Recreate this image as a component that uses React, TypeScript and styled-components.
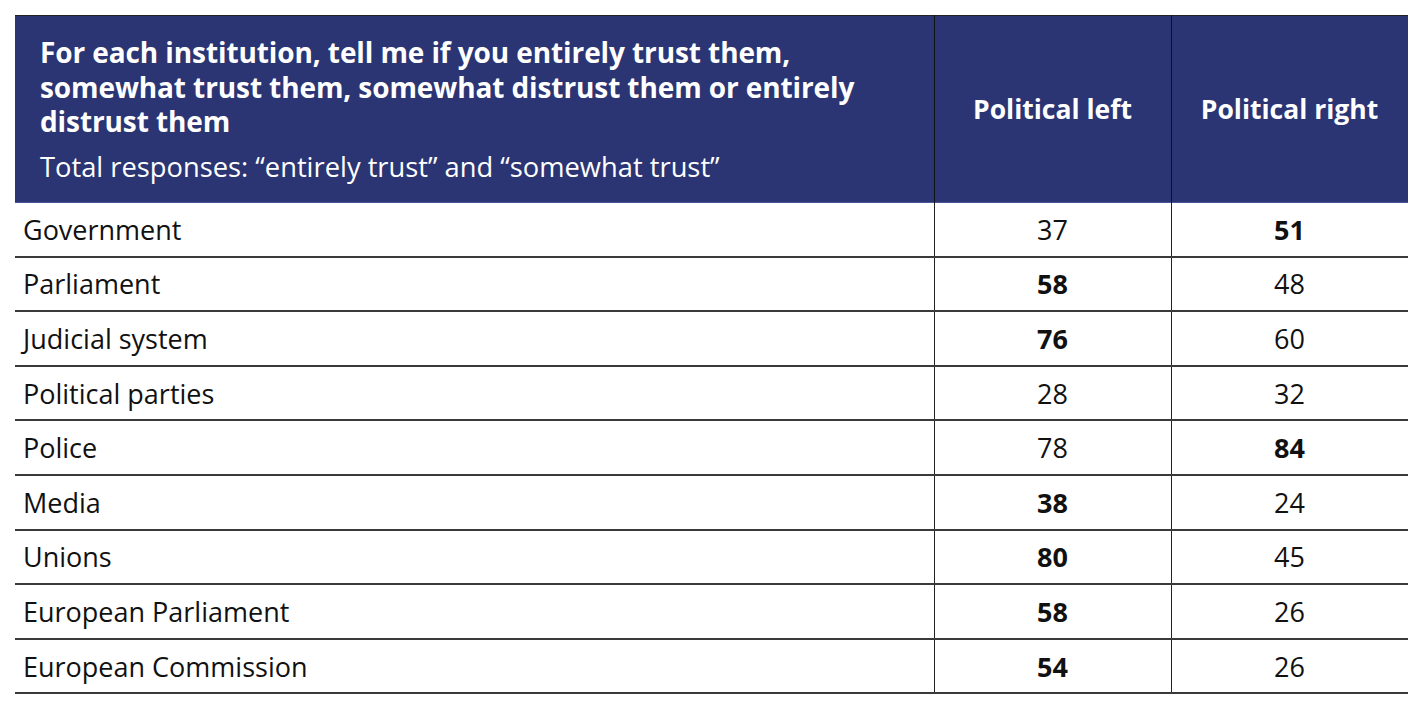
import React from "react";
import styled, { createGlobalStyle } from "styled-components";

const Global = createGlobalStyle`
  html, body { margin: 0; padding: 0; background: #ffffff; }
  body { font-family: "Open Sans", "Noto Sans", sans-serif; }
`;

const Page = styled.div`
  padding: 15px 20px 0 15px;
`;

const Table = styled.table`
  width: 1391px;
  border-collapse: collapse;
  table-layout: fixed;
  font-family: "Open Sans", "Noto Sans", sans-serif;
`;

const HeadRow = styled.tr`
  background: #2b3573;
  border-top: 1px solid #222;
  border-bottom: 1px solid #4a5596;
`;

const TitleCell = styled.th`
  width: 919px;
  height: 187px;
  padding: 19px 20px 0 25px;
  text-align: left;
  vertical-align: top;
  color: #fff;
  border-right: 1px solid #111;
  box-sizing: border-box;
`;

const Title = styled.div`
  font-size: 28px;
  line-height: 34.5px;
  font-weight: 700;
  letter-spacing: -0.1px;
  white-space: nowrap;
`;

const Subtitle = styled.div`
  margin-top: 12px;
  font-size: 27.3px;
  line-height: 32px;
  font-weight: 400;
  white-space: nowrap;
`;

const ColHead = styled.th<{ $last?: boolean }>`
  width: 236px;
  color: #fff;
  font-size: 26.5px;
  font-weight: 700;
  text-align: center;
  vertical-align: middle;
  padding: 0;
  white-space: nowrap;
  border-right: ${(p) => (p.$last ? "none" : "1px solid #111")};
`;

const Row = styled.tr`
  border-bottom: 2px solid #3a3a3a;
`;

const LabelCell = styled.td`
  height: 52.6px;
  padding: 0 0 0 8px;
  font-size: 27px;
  color: #111;
  border-right: 1px solid #222;
  vertical-align: middle;
  white-space: nowrap;
`;

const NumCell = styled.td<{ $bold?: boolean; $last?: boolean }>`
  text-align: center;
  font-size: 27px;
  color: #111;
  font-weight: ${(p) => (p.$bold ? 700 : 400)};
  border-right: ${(p) => (p.$last ? "none" : "1px solid #222")};
  vertical-align: middle;
`;

type Item = { name: string; left: number; right: number; bold: "left" | "right" | null };

const data: Item[] = [
  { name: "Government", left: 37, right: 51, bold: "right" },
  { name: "Parliament", left: 58, right: 48, bold: "left" },
  { name: "Judicial system", left: 76, right: 60, bold: "left" },
  { name: "Political parties", left: 28, right: 32, bold: null },
  { name: "Police", left: 78, right: 84, bold: "right" },
  { name: "Media", left: 38, right: 24, bold: "left" },
  { name: "Unions", left: 80, right: 45, bold: "left" },
  { name: "European Parliament", left: 58, right: 26, bold: "left" },
  { name: "European Commission", left: 54, right: 26, bold: "left" },
];

export default function App() {
  return (
    <Page>
      <Global />
      <Table>
        <thead>
          <HeadRow>
            <TitleCell>
              <Title>
                For each institution, tell me if you entirely trust them,
                <br />
                somewhat trust them, somewhat distrust them or entirely
                <br />
                distrust them
              </Title>
              <Subtitle>Total responses: “entirely trust” and “somewhat trust”</Subtitle>
            </TitleCell>
            <ColHead>Political left</ColHead>
            <ColHead $last>Political right</ColHead>
          </HeadRow>
        </thead>
        <tbody>
          {data.map((d) => (
            <Row key={d.name}>
              <LabelCell>{d.name}</LabelCell>
              <NumCell $bold={d.bold === "left"}>{d.left}</NumCell>
              <NumCell $bold={d.bold === "right"} $last>
                {d.right}
              </NumCell>
            </Row>
          ))}
        </tbody>
      </Table>
    </Page>
  );
}
